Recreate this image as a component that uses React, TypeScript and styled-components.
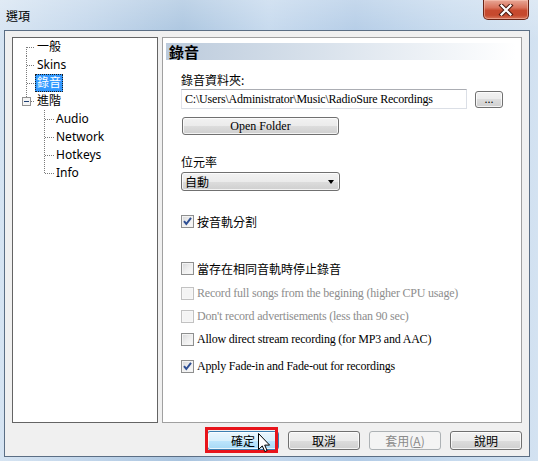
import React from 'react';
import styled, { createGlobalStyle } from 'styled-components';

const Global = createGlobalStyle`
  html, body { margin: 0; padding: 0; background: #c9dcef; }
  body { font-family: "Noto Sans", "Noto Sans CJK TC", sans-serif; }
`;

const Window = styled.div`
  width: 538px;
  height: 461px;
  display: flex;
  flex-direction: column;
  overflow: hidden;
  background:
    linear-gradient(to bottom, rgba(255,255,255,0.25), rgba(255,255,255,0) 40px),
    linear-gradient(to right, #d6e4f2 0%, #c2d6eb 16%, #a9c4df 34%, #c4d8ed 50%, #b2cbe6 66%, #c6daee 84%, #d3e2f1 100%);
`;

const TitleBar = styled.div`
  height: 30px;
  flex: none;
  display: flex;
  justify-content: space-between;
  align-items: flex-start;
  padding: 0 9px 0 6px;
`;

const Title = styled.div`
  font: 12px/30px "Noto Sans CJK TC", sans-serif;
  color: #000;
  padding-top: 1px;
`;

const CloseButton = styled.div`
  width: 46px;
  height: 20px;
  box-sizing: border-box;
  border: 1px solid #6a2416;
  border-top: none;
  border-radius: 0 0 5px 5px;
  background: linear-gradient(to bottom, #e8a796 0%, #d9735c 40%, #c74a2f 55%, #c5492d 80%, #d8765b 100%);
  box-shadow: inset 0 0 0 1px rgba(255, 210, 195, 0.45);
  display: flex;
  align-items: center;
  justify-content: center;
`;

const Client = styled.div`
  margin: 0 8px 4px 4px;
  height: 427px;
  box-sizing: border-box;
  border: 1px solid #5b6e84;
  background: #f0f0f0;
  display: flex;
  flex-direction: column;
`;

const Main = styled.div`
  display: flex;
  gap: 4px;
  padding: 6px 7px 0;
  height: 392px;
  box-sizing: border-box;
`;

const Tree = styled.div`
  width: 146px;
  height: 386px;
  box-sizing: border-box;
  border: 1px solid #646464;
  background: #fff;
  display: flex;
  flex-direction: column;
`;

const TreeRow = styled.div`
  height: 18px;
  display: flex;
  align-items: center;
  font: 12px "Noto Sans", "Noto Sans CJK TC", sans-serif;
  color: #000;
`;

const TreeLabel = styled.span<{ $selected?: boolean }>`
  height: 18px;
  box-sizing: border-box;
  line-height: 16px;
  padding: 0 1px;
  border: 1px dotted ${(p) => (p.$selected ? '#1b1b1b' : 'transparent')};
  background: ${(p) => (p.$selected ? '#3399ff' : 'transparent')};
  color: ${(p) => (p.$selected ? '#fff' : '#000')};
`;

const Panel = styled.div`
  flex: 1;
  height: 386px;
  box-sizing: border-box;
  border: 1px solid #a0a0a0;
  background: #fff;
  display: flex;
  flex-direction: column;
`;

const PanelHeader = styled.div`
  margin: 5px 5px 0 3px;
  height: 17px;
  padding-left: 3px;
  background: linear-gradient(to right, #bccbdc 0%, #d9e2ec 45%, #ffffff 100%);
  font: 700 15px/17px "Noto Sans CJK TC", sans-serif;
  color: #000;
`;

const PanelBody = styled.div`
  padding-left: 18px;
  display: flex;
  flex-direction: column;
  align-items: flex-start;
`;

const FieldLabel = styled.div<{ $mt: number }>`
  margin-top: ${(p) => p.$mt}px;
  font: 12px/16px "Noto Sans CJK TC", sans-serif;
  color: #000;
`;

const InputRow = styled.div`
  margin-top: 1px;
  display: flex;
  align-items: flex-start;
  gap: 8px;
`;

const TextInput = styled.div`
  width: 286px;
  height: 20px;
  box-sizing: border-box;
  border: 1px solid #dbdfe6;
  border-top-color: #abadb3;
  border-left-color: #e2e3ea;
  padding-left: 3px;
  background: #fff;
  font: 12px/18px "Liberation Serif", "Noto Sans CJK TC", serif;
  letter-spacing: -0.2px;
  color: #000;
  white-space: nowrap;
`;

const Btn = styled.div<{ $w: number; $h: number; $variant?: 'normal' | 'focus' | 'disabled'; $serif?: boolean; $ml?: number; $mt?: number }>`
  width: ${(p) => p.$w}px;
  height: ${(p) => p.$h}px;
  margin-left: ${(p) => p.$ml ?? 0}px;
  margin-top: ${(p) => p.$mt ?? 0}px;
  box-sizing: border-box;
  border-radius: 3px;
  border: 1px solid ${(p) => (p.$variant === 'focus' ? '#3c7fb1' : p.$variant === 'disabled' ? '#adb2b5' : '#707070')};
  background: ${(p) =>
    p.$variant === 'focus'
      ? 'linear-gradient(to bottom, #eaf6fd 0%, #d9f0fc 50%, #bee6fd 50%, #a7d9f5 100%)'
      : p.$variant === 'disabled'
      ? '#f4f4f4'
      : 'linear-gradient(to bottom, #f2f2f2 0%, #ebebeb 50%, #dddddd 50%, #cfcfcf 100%)'};
  box-shadow: ${(p) => (p.$variant === 'disabled' ? 'none' : 'inset 0 0 0 1px rgba(255,255,255,0.75)')};
  color: ${(p) => (p.$variant === 'disabled' ? '#8a8a8a' : '#000')};
  font: ${(p) => (p.$serif ? '12px "Liberation Serif", serif' : '12px "Noto Sans CJK TC", sans-serif')};
  line-height: ${(p) => p.$h - 2}px;
  text-align: center;
  white-space: nowrap;
`;

const Select = styled.div`
  margin-top: 2px;
  width: 159px;
  height: 19px;
  box-sizing: border-box;
  border: 1px solid #707070;
  border-radius: 3px;
  background: linear-gradient(to bottom, #f2f2f2 0%, #ebebeb 50%, #dddddd 50%, #cfcfcf 100%);
  box-shadow: inset 0 0 0 1px rgba(255,255,255,0.75);
  display: flex;
  align-items: center;
  justify-content: space-between;
  padding: 0 5px 0 3px;
  font: 12px/17px "Noto Sans CJK TC", sans-serif;
  color: #000;
`;

const Arrow = styled.span`
  width: 0;
  height: 0;
  border-left: 3.5px solid transparent;
  border-right: 3.5px solid transparent;
  border-top: 4px solid #000;
  margin-top: 1px;
`;

const CheckRow = styled.div<{ $mt: number; $disabled?: boolean }>`
  margin-top: ${(p) => p.$mt}px;
  height: 16px;
  display: flex;
  align-items: center;
  gap: 3px;
  font: 12px "Liberation Serif", "Noto Sans CJK TC", serif;
  letter-spacing: -0.2px;
  color: ${(p) => (p.$disabled ? '#8d8d8d' : '#000')};
  white-space: nowrap;
`;

const CjkText = styled.span`
  font: 12px "Noto Sans CJK TC", sans-serif;
  letter-spacing: 0;
`;

const Box = styled.span<{ $disabled?: boolean }>`
  width: 13px;
  height: 13px;
  box-sizing: border-box;
  flex: none;
  border: 1px solid ${(p) => (p.$disabled ? '#c2c2c2' : '#8e8f8f')};
  background: ${(p) =>
    p.$disabled ? '#f4f4f4' : 'linear-gradient(135deg, #d6d7d9 0%, #eeeeee 50%, #fbfbfb 100%)'};
  box-shadow: inset 0 0 0 1px ${(p) => (p.$disabled ? '#f7f7f7' : '#f3f3f3')};
  display: flex;
  align-items: center;
  justify-content: center;
`;

const ButtonRow = styled.div`
  display: flex;
  justify-content: flex-end;
  gap: 9px;
  padding: 8px 7px 0;
`;

const FocusWrap = styled.div`
  position: relative;
  height: 19px;
`;

const RedMark = styled.div`
  position: absolute;
  left: -2px;
  top: -4px;
  width: 73px;
  height: 26px;
  box-sizing: border-box;
  border: 3px solid #e8141b;
  pointer-events: none;
`;

const Cursor = styled.svg`
  position: absolute;
  left: 51px;
  top: 2px;
`;

type NodeT = {
  label: string;
  level: 0 | 1;
  first?: boolean;
  last?: boolean;
  expander?: boolean;
  selected?: boolean;
};

const nodes: NodeT[] = [
  { label: '一般', level: 0, first: true },
  { label: 'Skins', level: 0 },
  { label: '錄音', level: 0, selected: true },
  { label: '進階', level: 0, last: true, expander: true },
  { label: 'Audio', level: 1, first: true },
  { label: 'Network', level: 1 },
  { label: 'Hotkeys', level: 1 },
  { label: 'Info', level: 1, last: true },
];

const dot = { stroke: '#7a7a7a', strokeDasharray: '1 1', shapeRendering: 'crispEdges' as const };

function Connector({ n }: { n: NodeT }) {
  const w = n.level === 0 ? 22 : 41;
  return (
    <svg width={w} height={18} style={{ flex: 'none' }}>
      {n.level === 0 && (
        <>
          <line x1={13.5} x2={13.5} y1={n.first ? 9 : 0} y2={n.last ? (n.expander ? 5 : 10) : 18} {...dot} />
          <line x1={n.expander ? 18 : 14} x2={22} y1={9.5} y2={9.5} {...dot} />
          {n.expander && (
            <>
              <rect x={9.5} y={5.5} width={8} height={8} fill="#f4f4f4" stroke="#919191" shapeRendering="crispEdges" />
              <line x1={11} x2={16} y1={9.5} y2={9.5} stroke="#1e3f72" shapeRendering="crispEdges" />
            </>
          )}
        </>
      )}
      {n.level === 1 && (
        <>
          <line x1={31.5} x2={31.5} y1={0} y2={n.last ? 10 : 18} {...dot} />
          <line x1={32} x2={41} y1={9.5} y2={9.5} {...dot} />
        </>
      )}
    </svg>
  );
}

function Check({ checked, disabled }: { checked?: boolean; disabled?: boolean }) {
  return (
    <Box $disabled={disabled}>
      {checked && (
        <svg width="11" height="11" viewBox="0 0 11 11">
          <path d="M2 5.2 L4.3 8 L9 1.8" fill="none" stroke="#2e4f94" strokeWidth="2" />
        </svg>
      )}
    </Box>
  );
}

export default function App() {
  return (
    <>
      <Global />
      <Window>
        <TitleBar>
          <Title>選項</Title>
          <CloseButton>
            <svg width="16" height="12" viewBox="0 0 16 12">
              <path d="M3.5 1.5 L12.5 10.5 M12.5 1.5 L3.5 10.5" stroke="#4b1a10" strokeWidth="4.2" strokeLinecap="square" />
              <path d="M3.5 1.5 L12.5 10.5 M12.5 1.5 L3.5 10.5" stroke="#ffffff" strokeWidth="2.2" strokeLinecap="square" />
            </svg>
          </CloseButton>
        </TitleBar>
        <Client>
          <Main>
            <Tree>
              {nodes.map((n) => (
                <TreeRow key={n.label}>
                  <Connector n={n} />
                  <TreeLabel $selected={n.selected}>{n.label}</TreeLabel>
                </TreeRow>
              ))}
            </Tree>
            <Panel>
              <PanelHeader>錄音</PanelHeader>
              <PanelBody>
                <FieldLabel $mt={12}>錄音資料夾:</FieldLabel>
                <InputRow>
                  <TextInput>C:\Users\Administrator\Music\RadioSure Recordings</TextInput>
                  <Btn $w={28} $h={17} $mt={2} $serif>...</Btn>
                </InputRow>
                <Btn $w={157} $h={18} $ml={1} $mt={8} $serif>Open Folder</Btn>
                <FieldLabel $mt={19}>位元率</FieldLabel>
                <Select>
                  <span>自動</span>
                  <Arrow />
                </Select>
                <CheckRow $mt={22}>
                  <Check checked />
                  <CjkText>按音軌分割</CjkText>
                </CheckRow>
                <CheckRow $mt={31}>
                  <Check />
                  <CjkText>當存在相同音軌時停止錄音</CjkText>
                </CheckRow>
                <CheckRow $mt={9} $disabled>
                  <Check disabled />
                  Record full songs from the begining (higher CPU usage)
                </CheckRow>
                <CheckRow $mt={7} $disabled>
                  <Check disabled />
                  Don't record advertisements (less than 90 sec)
                </CheckRow>
                <CheckRow $mt={7}>
                  <Check />
                  Allow direct stream recording (for MP3 and AAC)
                </CheckRow>
                <CheckRow $mt={11}>
                  <Check checked />
                  Apply Fade-in and Fade-out for recordings
                </CheckRow>
              </PanelBody>
            </Panel>
          </Main>
          <ButtonRow>
            <FocusWrap>
              <Btn $w={72} $h={19} $variant="focus">確定</Btn>
              <RedMark />
              <Cursor width="13" height="20" viewBox="0 0 13 20">
                <path d="M0.5 0.5 V16.5 L4.3 12.9 L6.8 18.6 L9.1 17.6 L6.7 12.1 H11.6 Z" fill="#fff" stroke="#000" strokeLinejoin="miter" />
              </Cursor>
            </FocusWrap>
            <Btn $w={72} $h={19}>取消</Btn>
            <Btn $w={72} $h={19} $variant="disabled">
              套用(<u>A</u>)
            </Btn>
            <Btn $w={72} $h={19}>說明</Btn>
          </ButtonRow>
        </Client>
      </Window>
    </>
  );
}
